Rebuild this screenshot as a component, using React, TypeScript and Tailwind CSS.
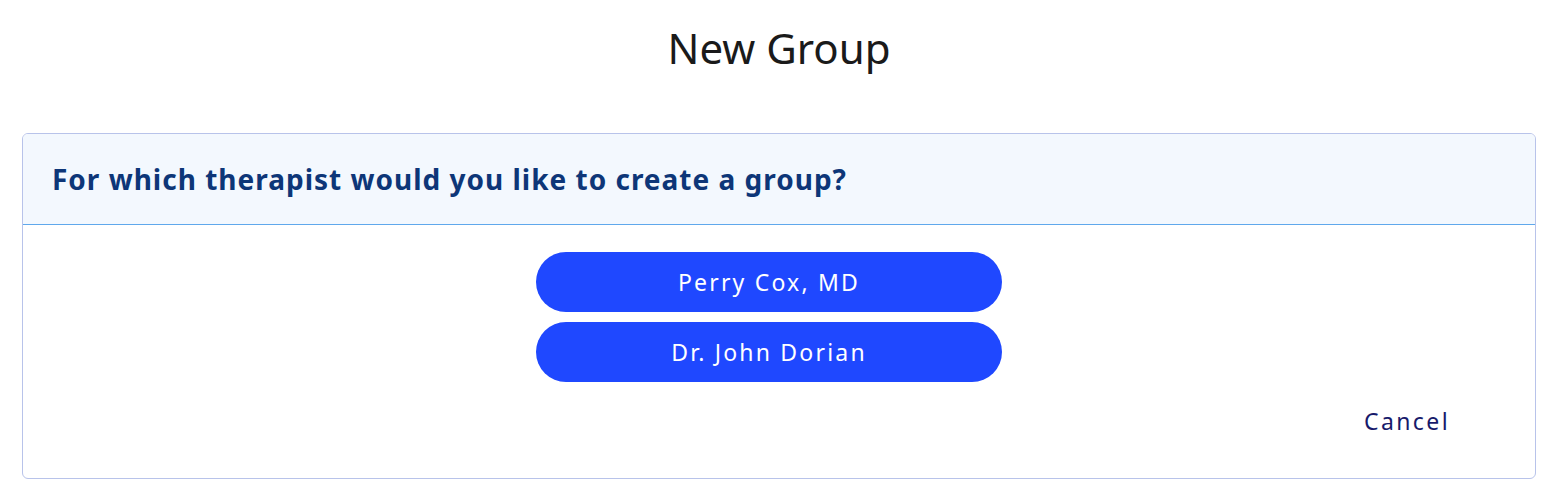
import React from 'react';

const therapists = ['Perry Cox, MD', 'Dr. John Dorian'];

export default function App() {
    return (
        <div className="w-full min-h-screen bg-white px-[22px] pt-[22px]" style={{ fontFamily: '"Noto Sans", "Open Sans", sans-serif' }}>
            <h1 className="text-center text-[42px] leading-[52px] text-[#1a1a1a] font-normal">New Group</h1>

            <div className="mt-[59px] border border-[#b8c3ea] rounded-[6px] overflow-hidden">
                {/* Header */}
                <div className="h-[91px] bg-[#f3f8fe] border-b border-[#5fa8ec] flex items-center px-[29px]">
                    <h2 className="text-[28px] font-bold tracking-[1px] text-[#0d3678]">For which therapist would you like to create a group?</h2>
                </div>

                {/* Options */}
                <div className="pt-[27px] pb-[40px] px-[85px]">
                    <div className="flex flex-col items-center gap-[10px] pr-[20px]">
                        {therapists.map((name) => (
                            <button
                                key={name}
                                className="w-[466px] h-[60px] rounded-full bg-[#1f48ff] text-white text-[23px] tracking-[2.2px]"
                            >
                                {name}
                            </button>
                        ))}
                    </div>
                    <div className="flex justify-end mt-[22px]">
                        <button className="text-[23px] tracking-[2.4px] text-[#171a6b] leading-[34px]">Cancel</button>
                    </div>
                </div>
            </div>
        </div>
    );
}
